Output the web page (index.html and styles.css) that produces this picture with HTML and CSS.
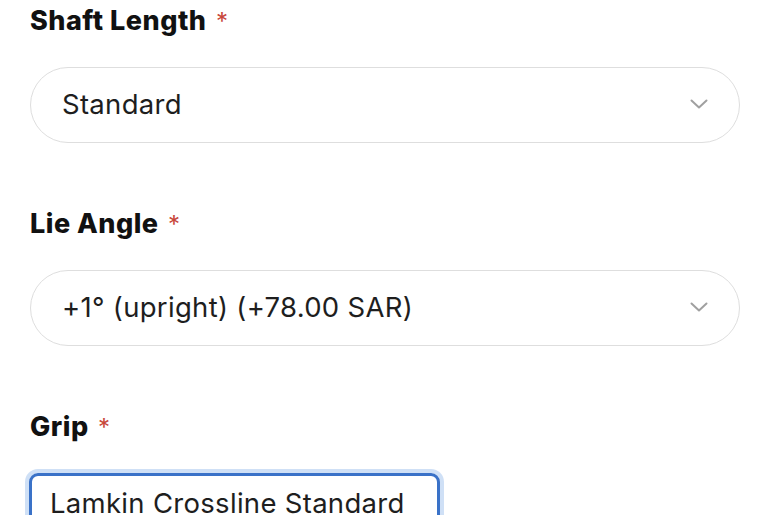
FILE: index.html
```html
<!DOCTYPE html>
<html lang="en">
<head>
<meta charset="utf-8">
<title>Options</title>
<link rel="stylesheet" href="styles.css">
</head>
<body>
<form class="form">
  <div class="field">
    <label class="label">Shaft Length <span class="req">*</span></label>
    <div class="select">
      <span class="value">Standard</span>
      <svg class="chev" width="18" height="10" viewBox="0 0 18 10"><path d="M1.5 1.5 L9 8.5 L16.5 1.5" fill="none" stroke="#a0a0a0" stroke-width="2" stroke-linecap="round" stroke-linejoin="round"/></svg>
    </div>
  </div>
  <div class="field">
    <label class="label">Lie Angle <span class="req">*</span></label>
    <div class="select">
      <span class="value">+1° (upright) (+78.00 SAR)</span>
      <svg class="chev" width="18" height="10" viewBox="0 0 18 10"><path d="M1.5 1.5 L9 8.5 L16.5 1.5" fill="none" stroke="#a0a0a0" stroke-width="2" stroke-linecap="round" stroke-linejoin="round"/></svg>
    </div>
  </div>
  <div class="field">
    <label class="label">Grip <span class="req">*</span></label>
    <div class="input">
      <span class="value">Lamkin Crossline Standard</span>
    </div>
  </div>
</form>
</body>
</html>
```
FILE: styles.css
```css
html, body {
  margin: 0;
  padding: 0;
  background: #ffffff;
  overflow: hidden;
  height: 515px;
}
body {
  font-family: Inter, "Noto Sans", sans-serif;
  color: #1c1c1c;
}
.form {
  padding: 0 30px;
  display: flex;
  flex-direction: column;
  gap: 60px;
}
.field {
  display: flex;
  flex-direction: column;
  gap: 26px;
}
.label {
  font-size: 27px;
  font-weight: 800;
  line-height: 40px;
  color: #111111;
  letter-spacing: 0.5px;
  padding-top: 1px;
}
.req {
  color: #c8473a;
  font-weight: 400;
  font-size: 24px;
  margin-left: 3px;
  letter-spacing: 0;
}
.select {
  height: 76px;
  margin-top: -1px;
  box-sizing: border-box;
  border: 1.5px solid #dedede;
  border-radius: 38px;
  display: flex;
  align-items: center;
  justify-content: space-between;
  padding: 0 31px 3px 31px;
}
.value {
  font-size: 27.5px;
  font-weight: 400;
  color: #1e1e1e;
  letter-spacing: 0.3px;
  white-space: nowrap;
}
.chev {
  display: block;
}
.input {
  width: 411px;
  height: 80px;
  margin-top: -1px;
  box-sizing: border-box;
  margin-left: -1px;
  border: 3px solid #3a72c8;
  border-radius: 9px;
  box-shadow: 0 0 0 4px #cfe0f6;
  padding: 10px 0 0 18px;
}
```
